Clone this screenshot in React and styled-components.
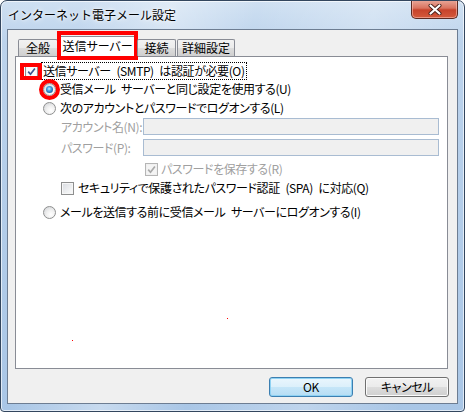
import React from "react";
import styled, { createGlobalStyle } from "styled-components";

const Global = createGlobalStyle`
  body {
    margin: 0;
    background: #ffffff;
  }
  * {
    box-sizing: border-box;
  }
`;

const font = `"Noto Sans CJK JP", "Noto Sans", sans-serif`;

const Window = styled.div`
  width: 465px;
  height: 412px;
  display: flex;
  flex-direction: column;
  padding: 0 6px 7px 6px;
  border: 1px solid #33465e;
  border-radius: 7px 7px 4px 4px;
  background:
    linear-gradient(100deg, rgba(255,255,255,0) 15%, rgba(255,255,255,0.35) 32%, rgba(255,255,255,0) 48%, rgba(255,255,255,0.25) 70%, rgba(255,255,255,0) 88%),
    linear-gradient(180deg, #cfe0f2 0%, #bcd3ec 10%, #a9c6e6 100%);
  box-shadow: inset 0 0 0 1px rgba(255, 255, 255, 0.65);
  font-family: ${font};
  font-size: 12px;
  color: #000;
  overflow: hidden;
`;

const TitleBar = styled.div`
  height: 28px;
  display: flex;
  align-items: flex-start;
  justify-content: space-between;
`;

const Title = styled.div`
  margin-top: 6px;
  padding-left: 1px;
  font-size: 12px;
  line-height: 16px;
  white-space: nowrap;
  text-shadow: 0 0 6px rgba(255, 255, 255, 0.95), 0 0 3px rgba(255, 255, 255, 0.9);
`;

const CloseButton = styled.div`
  width: 47px;
  height: 19px;
  margin-top: -1px;
  display: flex;
  align-items: center;
  justify-content: center;
  border: 1px solid #5b2a22;
  border-top: none;
  border-radius: 0 0 5px 5px;
  background: linear-gradient(180deg, #e9a99b 0%, #d9735f 45%, #c7432b 55%, #d45a3c 100%);
  box-shadow: inset 0 0 0 1px rgba(255, 200, 190, 0.55);
`;

const Client = styled.div`
  flex: 1;
  display: flex;
  flex-direction: column;
  padding: 7px 9px 0 7px;
  border: 1px solid #6d7d92;
  background: #f0f0f0;
  font-feature-settings: "palt" 1;
  letter-spacing: -0.4px;
`;

const TabStrip = styled.div`
  display: flex;
  align-items: flex-end;
  height: 19px;
  padding-left: 3px;
  position: relative;
  z-index: 1;
`;

const Tab = styled.div`
  position: relative;
  width: ${(p) => p.$w}px;
  height: ${(p) => (p.$active ? 21 : 17)}px;
  margin-left: ${(p) => p.$ml || 0}px;
  margin-bottom: ${(p) => (p.$active ? -1 : 0)}px;
  display: flex;
  align-items: center;
  justify-content: center;
  padding-bottom: ${(p) => (p.$active ? 2 : 0)}px;
  border: 1px solid #898c95;
  border-bottom: none;
  border-radius: 2px 2px 0 0;
  background: ${(p) =>
    p.$active
      ? "#ffffff"
      : "linear-gradient(180deg, #f2f2f2 0%, #ebebeb 50%, #dddddd 50%, #cfcfcf 100%)"};
  white-space: nowrap;
  line-height: 14px;
  letter-spacing: 0;
`;

const Mark = styled.span`
  position: absolute;
  border: 4px solid #ff0000;
  border-radius: ${(p) => (p.$round ? "50%" : "0")};
  left: ${(p) => p.$l}px;
  top: ${(p) => p.$t}px;
  width: ${(p) => p.$w}px;
  height: ${(p) => p.$h}px;
  pointer-events: none;
`;

const Panel = styled.div`
  position: relative;
  height: 313px;
  display: flex;
  flex-direction: column;
  padding-top: 5px;
  border: 1px solid #898c95;
  background: #ffffff;
`;

const Row = styled.div`
  display: flex;
  align-items: center;
  height: ${(p) => p.$h || 18}px;
  margin-top: ${(p) => p.$mt || 0}px;
  padding-left: ${(p) => p.$indent}px;
  gap: ${(p) => (p.$gap === undefined ? 3 : p.$gap)}px;
`;

const Label = styled.span`
  white-space: nowrap;
  line-height: 16px;
  color: ${(p) => (p.$disabled ? "#a0a0a0" : "#000")};
  border: 1px dotted ${(p) => (p.$focus ? "#000" : "transparent")};
  padding: 0 1px;
  margin-left: -1px;
`;

const FieldLabel = styled(Label)`
  width: 84px;
  flex-shrink: 0;
`;

const TextBox = styled.div`
  width: 296px;
  height: 17px;
  flex-shrink: 0;
  border: 1px solid #a9bcd2;
  background: #f0f0f0;
`;

const BoxWrap = styled.span`
  position: relative;
  width: 13px;
  height: 13px;
  flex-shrink: 0;
`;

const Box = styled.span`
  display: flex;
  align-items: center;
  justify-content: center;
  width: 13px;
  height: 13px;
  border: 1px solid ${(p) => (p.$disabled ? "#b5b5b5" : "#8e8f8f")};
  background: ${(p) =>
    p.$disabled
      ? "#f4f4f4"
      : p.$checked
      ? "linear-gradient(135deg, #f4f6f8, #ffffff)"
      : "linear-gradient(135deg, #d8dbe0 0%, #f2f3f4 70%, #fbfbfb 100%)"};
  box-shadow: inset 0 0 0 1px ${(p) => (p.$disabled ? "#f0f0f0" : "#f6f6f6")};
`;

const Radio = styled.span`
  display: flex;
  align-items: center;
  justify-content: center;
  width: 13px;
  height: 13px;
  border-radius: 50%;
  border: 1px solid #8e8f8f;
  background: radial-gradient(circle at 62% 68%, #ffffff 0%, #f1f1f1 40%, #cdd0d4 100%);

  &::after {
    content: "";
    display: ${(p) => (p.$checked ? "block" : "none")};
    width: 7px;
    height: 7px;
    border-radius: 50%;
    background: radial-gradient(circle at 45% 40%, #c8f0ff 0%, #46a2e4 35%, #17599c 75%, #0c3a6e 100%);
  }
`;

const Dot = styled.span`
  position: absolute;
  width: 1px;
  height: 1px;
  background: #ff0000;
  left: ${(p) => p.$x}px;
  top: ${(p) => p.$y}px;
`;

const ButtonRow = styled.div`
  display: flex;
  justify-content: flex-end;
  gap: 12px;
  margin-top: 8px;
  margin-right: -1px;
`;

const Button = styled.div`
  width: 84px;
  height: 20px;
  display: flex;
  align-items: center;
  justify-content: center;
  border-radius: 3px;
  line-height: 14px;
  border: 1px solid ${(p) => (p.$primary ? "#3c7fb1" : "#707070")};
  background: ${(p) =>
    p.$primary
      ? "linear-gradient(180deg, #eaf6fd 0%, #dcf0fb 50%, #c6e6f8 50%, #b6ddf4 100%)"
      : "linear-gradient(180deg, #f2f2f2 0%, #ebebeb 50%, #dddddd 50%, #cfcfcf 100%)"};
  box-shadow: inset 0 0 0 1px ${(p) => (p.$primary ? "#8fd2f3" : "#fbfbfb")};
`;

const Check = ({ checked, disabled, children }) => (
  <BoxWrap>
    <Box $checked={checked} $disabled={disabled}>
      {checked && (
        <svg width="9" height="9" viewBox="0 0 9 9">
          <path
            d="M1.2 4.6 L3.5 7.2 L7.9 1.4"
            fill="none"
            stroke={disabled ? "#a9a9a9" : "#3b5691"}
            strokeWidth="1.7"
          />
        </svg>
      )}
    </Box>
    {children}
  </BoxWrap>
);

const RadioButton = ({ checked, children }) => (
  <BoxWrap>
    <Radio $checked={checked} />
    {children}
  </BoxWrap>
);

export default function App() {
  return (
    <>
      <Global />
      <Window>
        <TitleBar>
          <Title>インターネット電子メール設定</Title>
          <CloseButton>
            <svg width="14" height="11" viewBox="0 0 14 11">
              <path
                d="M2.5 1.5 L11.5 9.5 M11.5 1.5 L2.5 9.5"
                stroke="#4a2019"
                strokeWidth="4"
                strokeLinecap="round"
              />
              <path
                d="M2.5 1.5 L11.5 9.5 M11.5 1.5 L2.5 9.5"
                stroke="#ffffff"
                strokeWidth="2.2"
                strokeLinecap="round"
              />
            </svg>
          </CloseButton>
        </TitleBar>
        <Client>
          <TabStrip>
            <Tab $w={40}>全般</Tab>
            <Tab $w={79} $active>
              送信サーバー
              <Mark $l={-2} $t={-6} $w={81} $h={29} />
            </Tab>
            <Tab $w={39}>接続</Tab>
            <Tab $w={58} $ml={1}>
              詳細設定
            </Tab>
          </TabStrip>
          <Panel>
            <Row $indent={9} $gap={4}>
              <Check checked>
                <Mark $l={-5} $t={-2} $w={22} $h={17} />
              </Check>
              <Label $focus>{"送信サーバー\u2002(SMTP)\u2002は認証が必要(O)"}</Label>
            </Row>
            <Row $indent={27}>
              <RadioButton checked>
                <Mark $round $l={-4} $t={-4} $w={21} $h={21} />
              </RadioButton>
              <Label>{"受信メール\u2002サーバーと同じ設定を使用する(U)"}</Label>
            </Row>
            <Row $indent={27} $mt={1}>
              <RadioButton />
              <Label>次のアカウントとパスワードでログオンする(L)</Label>
            </Row>
            <Row $indent={44} $mt={1} $h={17} $gap={0}>
              <FieldLabel $disabled>アカウント名(N):</FieldLabel>
              <TextBox />
            </Row>
            <Row $indent={44} $mt={4} $h={17} $gap={0}>
              <FieldLabel $disabled>パスワード(P):</FieldLabel>
              <TextBox />
            </Row>
            <Row $indent={129} $mt={4} $gap={2}>
              <Check checked disabled />
              <Label $disabled>パスワードを保存する(R)</Label>
            </Row>
            <Row $indent={45} $mt={1}>
              <Check />
              <Label>{"セキュリティで保護されたパスワード認証\u2002(SPA)\u2002に対応(Q)"}</Label>
            </Row>
            <Row $indent={27} $mt={6}>
              <RadioButton />
              <Label>{"メールを送信する前に受信メール\u2002サーバーにログオンする(I)"}</Label>
            </Row>
            <Dot $x={211} $y={261} />
            <Dot $x={56} $y={283} />
          </Panel>
          <ButtonRow>
            <Button $primary>OK</Button>
            <Button>キャンセル</Button>
          </ButtonRow>
        </Client>
      </Window>
    </>
  );
}
